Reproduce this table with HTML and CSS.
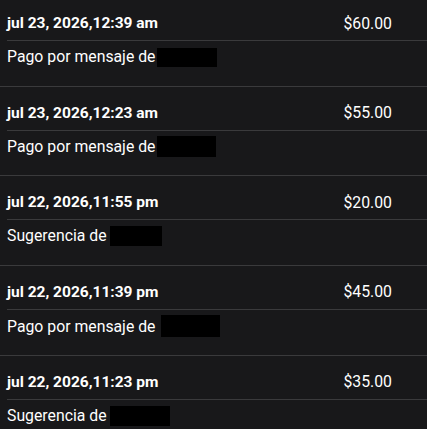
FILE: index.html
```html
<!DOCTYPE html>
<html lang="es">
<head>
<meta charset="utf-8">
<link rel="stylesheet" href="styles.css">
</head>
<body>
<div class="list">
  <div class="item">
    <div class="head"><span class="date">jul 23, 2026,12:39 am</span><span class="amount">$60.00</span></div>
    <div class="desc">Pago por mensaje de<span class="redact r1"></span></div>
  </div>
  <div class="item">
    <div class="head"><span class="date">jul 23, 2026,12:23 am</span><span class="amount">$55.00</span></div>
    <div class="desc">Pago por mensaje de<span class="redact r2"></span></div>
  </div>
  <div class="item">
    <div class="head"><span class="date">jul 22, 2026,11:55 pm</span><span class="amount">$20.00</span></div>
    <div class="desc">Sugerencia de <span class="redact r3"></span></div>
  </div>
  <div class="item">
    <div class="head"><span class="date">jul 22, 2026,11:39 pm</span><span class="amount">$45.00</span></div>
    <div class="desc">Pago por mensaje de <span class="redact r4"></span></div>
  </div>
  <div class="item">
    <div class="head"><span class="date">jul 22, 2026,11:23 pm</span><span class="amount">$35.00</span></div>
    <div class="desc">Sugerencia de <span class="redact r5"></span></div>
  </div>
</div>
</body>
</html>
```
FILE: styles.css
```css
html, body {
  margin: 0;
  background: #18181a;
  color: #ffffff;
  font-family: Roboto, "Liberation Sans", sans-serif;
  overflow: hidden;
}
.list {
  margin-top: -3px;
}
.item {
  border-bottom: 1px solid #3a3a3c;
}
.head {
  margin-left: 7px;
  padding-right: 35px;
  height: 44px;
  padding-top: 9px;
  box-sizing: border-box;
  display: flex;
  align-items: center;
  justify-content: space-between;
  border-bottom: 1px solid #3a3a3c;
}
.date {
  font-weight: 700;
  font-size: 15.5px;
}
.amount {
  font-size: 15.8px;
}
.desc {
  height: 44.67px;
  box-sizing: border-box;
  padding: 5px 0 0 7px;
  font-size: 15.8px;
  line-height: 22px;
}
.redact {
  display: inline-block;
  background: #000;
  vertical-align: -5px;
  margin-left: 2px;
}
.r1 { width: 60px; height: 19px; }
.r2 { width: 59px; height: 21px; }
.r3 { width: 52px; height: 20px; margin-left: 0; }
.r4 { width: 59px; height: 22px; margin-left: 2px; }
.r5 { width: 60px; height: 20px; margin-left: 0; }
```
